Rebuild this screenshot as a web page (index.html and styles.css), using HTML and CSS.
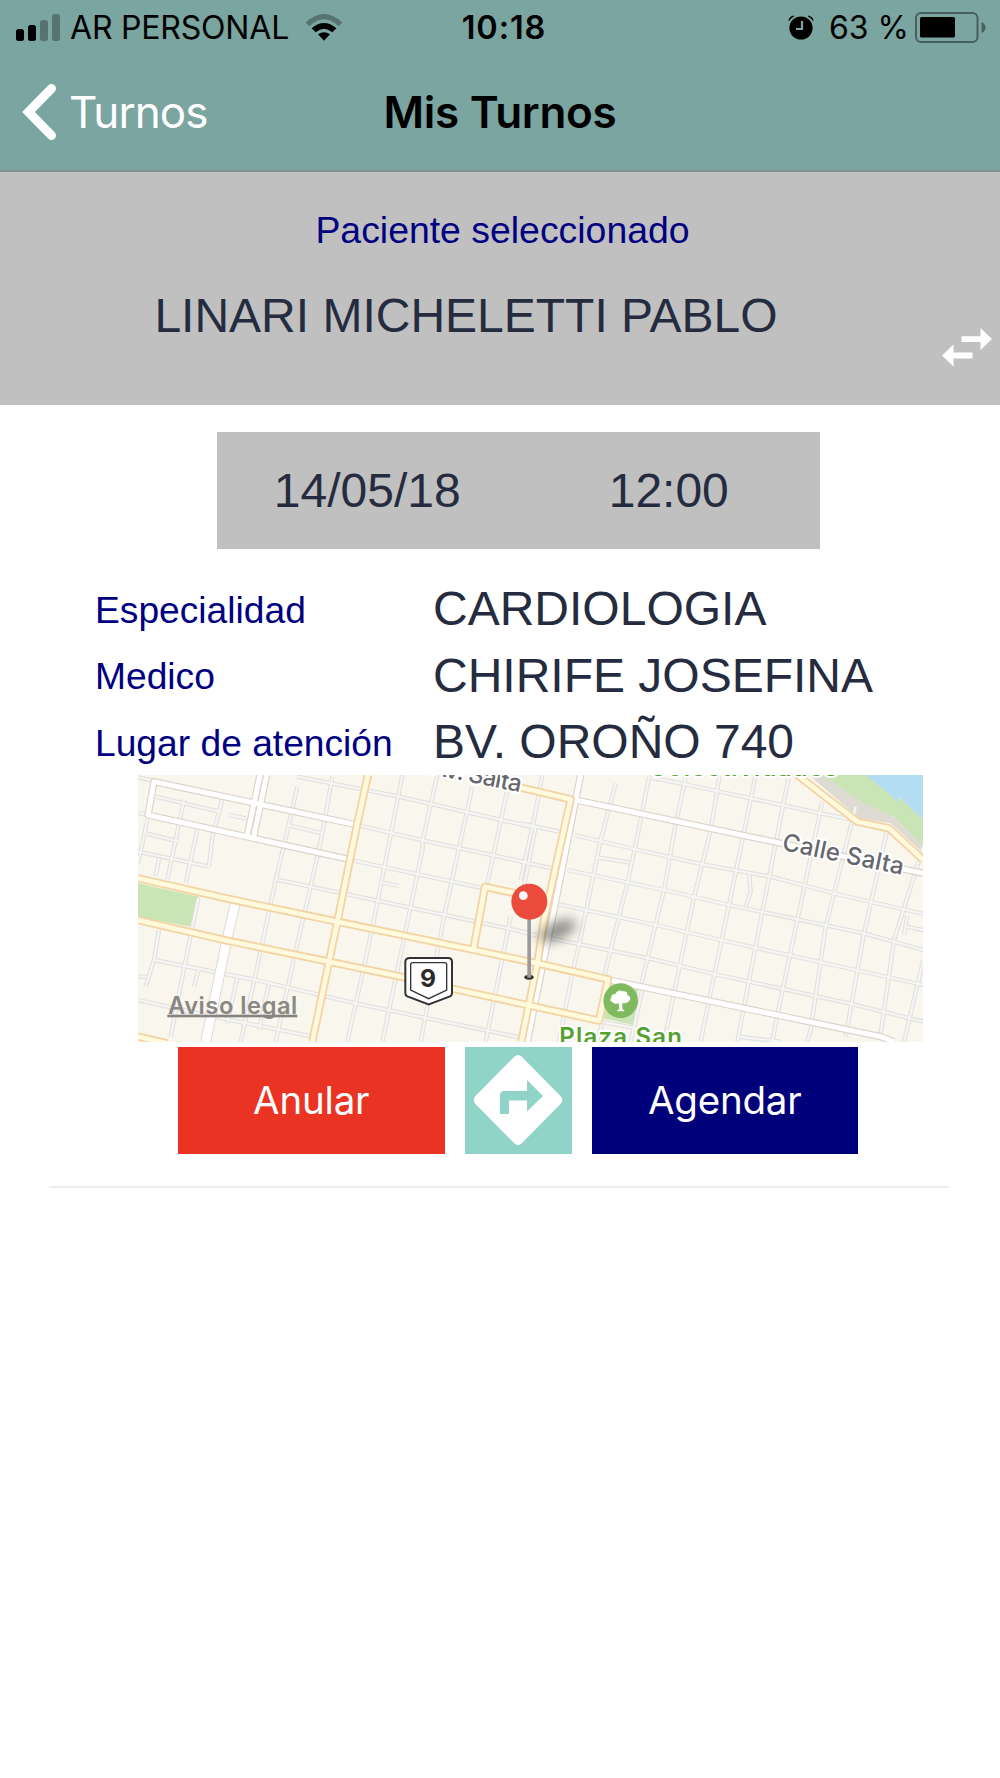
FILE: index.html
```html
<!DOCTYPE html>
<html lang="es">
<head>
    <meta charset="UTF-8">
    <meta name="viewport" content="width=device-width, initial-scale=1.0">
    <title>Mis Turnos</title>
    <link rel="stylesheet" href="styles.css">
</head>
<body>
    <header class="header">
        <div class="status-bar">
            <div class="status-left">
                <svg class="signal" width="46" height="28" viewBox="0 0 46 28">
                    <rect x="1" y="15" width="8" height="12" rx="2.5"/>
                    <rect x="13" y="11" width="8" height="16" rx="2.5"/>
                    <rect class="dim" x="25" y="6" width="8" height="21" rx="2.5"/>
                    <rect class="dim" x="37" y="0" width="8" height="27" rx="2.5"/>
                </svg>
                <span class="carrier">AR PERSONAL</span>
                <svg class="wifi" width="38" height="28" viewBox="0 0 38 28">
                    <path class="dim" d="M0.5 8.5Q19 -8.5 37.5 8.5L33.5 12.2Q19 -1.5 4.5 12.2Z"/>
                    <path d="M6.5 14.2Q19 3.8 31.5 14.2L27.3 18.3Q19 11 10.7 18.3Z"/>
                    <path d="M13 20.3Q19 16 25 20.3L19 26.7Z"/>
                </svg>
            </div>
            <span class="clock">10:18</span>
            <div class="status-right">
                <svg class="alarm" width="26" height="26" viewBox="0 0 26 26">
                    <circle cx="13" cy="13" r="11.6"/>
                    <path d="M0.3 5.8Q1.5 0.7 6.3 0.5L5.8 1.8Q3 2.8 1.3 5.8ZM25.7 5.8Q24.5 0.7 19.7 0.5L20.2 1.8Q23 2.8 24.7 5.8Z"/>
                    <path class="hands" d="M14 6V14H8"/>
                </svg>
                <span class="percent">63 %</span>
                <svg class="battery" width="71" height="31" viewBox="0 0 71 31">
                    <rect class="battery-case" x="1" y="1" width="61.5" height="29" rx="5"/>
                    <rect x="5" y="5" width="35" height="20.5" rx="1.5"/>
                    <path class="battery-tip" d="M66.5 10Q70.5 12 70.5 15.5T66.5 21Z"/>
                </svg>
            </div>
        </div>
        <nav class="navbar">
            <a class="back">
                <svg width="34" height="58" viewBox="0 0 34 58"><path d="M29.5 5.5L6.5 29L29.5 52.5"/></svg>
                <span>Turnos</span>
            </a>
            <h1 class="title">Mis Turnos</h1>
        </nav>
    </header>

    <section class="patient">
        <p class="patient-label">Paciente seleccionado</p>
        <p class="patient-name">LINARI MICHELETTI PABLO</p>
        <svg class="swap" width="50" height="39" viewBox="0 0 50 39">
            <path d="M19.5 8.3H38.5V0L50 11L38.5 22V14H19.5ZM30.5 24.5H11.5V16.5L0 27.5L11.5 38.5V30.5H30.5Z"/>
        </svg>
    </section>

    <main class="turno">
        <div class="date-box">
            <span>14/05/18</span>
            <span>12:00</span>
        </div>
        <dl class="details">
            <dt>Especialidad</dt><dd>CARDIOLOGIA</dd>
            <dt>Medico</dt><dd>CHIRIFE JOSEFINA</dd>
            <dt>Lugar de atención</dt><dd>BV. OROÑO 740</dd>
        </dl>

        <svg class="map" viewBox="22 15 2355 801" preserveAspectRatio="none">
            <defs>
                <filter id="blur" x="-50%" y="-100%" width="200%" height="300%"><feGaussianBlur stdDeviation="18"/></filter>
                <g id="minor">
                    <path d="M500 20L805 80L1200 170M680 165L880 212L1200 280M660 270L1200 385M435 328L740 392L1200 490M470 165L575 190M75 80L265 125M45 190L145 215M22 245L235 290M295 135L345 145M755 338L805 348M70 570L375 630L675 700L1180 805M22 620H50M22 690L250 740L545 800M22 22L70 32M22 128L50 135"/>
                    <path d="M500 50L480 140L435 330L380 590L330 815M605 20L575 190L540 350L500 520L435 815M815 15L740 400L700 590L650 815M920 15L875 215L876 235L840 410L755 815M1025 50L940 440L870 815M1130 60L1068 350M1140 440L1065 815M1215 170L1180 350M280 70L245 200L235 290M203 385L185 470L120 800M160 90L110 330M200 180L165 340M50 150L22 280M85 265L75 320M85 480L70 570L45 650M320 620L290 760M205 595L190 650M415 640L385 780"/>
                    <g transform="translate(1170)">
                        <path d="M385 22L490 42L900 130L1000 150M160 195L340 237L545 283L750 320L960 375L1208 432M140 300L430 360L625 405L1030 490L1208 540M115 403L405 465L600 510L1005 600L1208 645M90 505L385 565L580 612L985 700L1208 755M230 262L328 278M0 160L115 185M0 275L95 295M1155 470L1208 480M1160 435L1150 495M240 755L350 775M650 800L780 815M0 485L60 500"/>
                        <path d="M285 40L240 210L175 525L155 610L115 815M385 22L345 225L320 340L250 620M497 16L465 160L430 360L360 650M597 16L570 180L520 382L460 670L430 815M705 16L625 405L565 690L540 815M805 16L725 425L670 710L650 815M905 95L830 450L770 735L755 815M1005 110L915 470L870 780L860 815M1100 180L1030 490L975 800M1208 230L1120 510L1080 790M1208 570L1150 815M685 305L690 365L675 410M65 16L40 150L0 330M365 660L330 815M245 755L230 815"/>
                    </g>
                </g>
                <g id="white-major">
                    <path d="M680 165L70 35L52 135L655 268M388 15L350 195M408 15L368 205M1350 15L1335 90L1270 420L1235 590L1190 815M1335 90L2378 310M1435 630L2250 800L2290 815"/>
                </g>
                <g id="yellow-major">
                    <path d="M22 325L300 388L620 455L1030 540L1220 580L1432 628L1405 752L1190 705L970 657L820 622L595 575L290 512L22 450M712 15L680 160L620 455L595 575L545 815M1028 540L1063 350L1200 380M1150 48L1320 88L1240 450L1220 580L1172 815M22 800L110 820M2000 15L2180 155L2275 175L2378 270"/>
                </g>
            </defs>
            <rect class="land" x="22" y="15" width="2355" height="801"/>
            <path class="park" d="M22 340L205 380L188 472L22 440ZM1425 640H1525L1508 765L1415 745Z"/>
            <path class="shore" d="M2035 15L2185 145L2280 160L2378 250V200L2100 15Z"/>
            <path class="park" d="M2075 15L2200 100L2290 140L2378 225V140L2220 15Z"/>
            <path class="water" d="M2205 15L2280 75L2300 98L2305 80L2378 150V15Z"/>
            <use class="minor-case" href="#minor"/>
            <use class="minor-fill" href="#minor"/>
            <path class="boulevard-case" d="M315 395L288 512L225 816"/>
            <path class="boulevard" d="M315 395L288 512L225 816"/>
            <use class="white-case" href="#white-major"/>
            <use class="white-fill" href="#white-major"/>
            <use class="yellow-case" href="#yellow-major"/>
            <use class="yellow-fill" href="#yellow-major"/>

            <text class="street" transform="translate(898 12) rotate(11.5)" textLength="276">Av. Salta</text>
            <text class="street" transform="translate(1952 239) rotate(11.8)" textLength="370">Calle Salta</text>
            <text class="place" x="1555" y="19" textLength="565">Colectividades</text>
            <text class="place" x="1286" y="825" textLength="368">Plaza San</text>

            <g class="route">
                <path class="route-outer" d="M838 564H952Q964 564 964 576V670Q964 676 958 679L894 703L830 679Q824 676 824 670V576Q824 564 838 564Z"/>
                <path class="route-inner" d="M846 578H942Q948 578 948 584V660L894 686L840 660V584Q840 578 846 578Z"/>
                <text x="892" y="652">9</text>
            </g>

            <circle class="tree-disc" cx="1470" cy="692" r="52"/>
            <path class="tree" d="M1464 698Q1454 706 1445 696Q1434 692 1442 683Q1441 671 1454 672Q1462 656 1477 664Q1492 663 1490 675Q1504 681 1496 692Q1488 702 1475 699V716L1482 724H1458L1466 716Z"/>

            <ellipse class="pin-shadow" cx="1280" cy="482" rx="60" ry="26" transform="rotate(-25 1280 482)" filter="url(#blur)"/>
            <ellipse class="pin-base" cx="1195" cy="622" rx="14" ry="7"/>
            <rect class="pin-stem" x="1190" y="440" width="11" height="183"/>
            <circle class="pin-head" cx="1196" cy="395" r="54"/>
            <circle class="pin-shine" cx="1178" cy="377" r="13"/>

            <text class="legal" x="112" y="733" textLength="388">Aviso legal</text>
            <rect class="legal-line" x="110" y="734" width="390" height="8"/>
        </svg>

        <div class="actions">
            <button class="btn btn-cancel">Anular</button>
            <button class="btn btn-route">
                <svg width="90" height="92" viewBox="0 0 90 92">
                    <path class="diamond" d="M41.5 2.5Q45 -0.5 48.5 2.5L87.5 42Q91 46 87.5 50L48.5 89.5Q45 92.5 41.5 89.5L2.5 50Q-1 46 2.5 42Z"/>
                    <path class="turn" d="M27 60V41Q27 37 31 37H54V26L70 42L54 57.5V46.5H36V60Z"/>
                </svg>
            </button>
            <button class="btn btn-schedule">Agendar</button>
        </div>
    </main>
</body>
</html>
```

FILE: styles.css
```css
* {
    box-sizing: border-box;
}
body {
    margin: 0;
    background: white;
    font-family: "Liberation Sans", Arial, sans-serif;
    color: #262c40;
}
p, h1, dl, dd {
    margin: 0;
}
.header {
    height: 172px;
    background: #7ba5a0;
    border-bottom: 2px solid #808f8c;
    font-family: Inter, sans-serif;
    color: black;
}
.status-bar {
    display: grid;
    grid-template-columns: 1fr auto 1fr;
    align-items: center;
    height: 54px;
    padding: 1px 14px 0 15px;
    font-size: 32px;
}
.status-left, .status-right {
    display: flex;
    align-items: center;
}
.status-right {
    justify-content: flex-end;
}
.dim {
    opacity: 0.3;
}
.carrier {
    margin-left: 9px;
    letter-spacing: -0.2px;
}
.wifi {
    margin-left: 16px;
}
.clock {
    padding-left: 7px;
    font-size: 32.5px;
    font-weight: 600;
    letter-spacing: 0.9px;
}
.percent {
    margin: 0 6px 0 15px;
}
.hands {
    fill: none;
    stroke: #7ba5a0;
    stroke-width: 2.2;
}
.battery-case {
    fill: none;
    stroke: #47605d;
    stroke-width: 2;
}
.battery-tip {
    fill: #47605d;
}
.navbar {
    display: grid;
    grid-template-columns: 1fr auto 1fr;
    align-items: center;
    height: 116px;
    padding: 0 22px;
    font-size: 44px;
}
.back {
    display: flex;
    align-items: center;
    gap: 13px;
    letter-spacing: -0.9px;
    color: white;
}
.back path {
    fill: none;
    stroke: white;
    stroke-width: 9;
    stroke-linecap: round;
}
.title {
    font-size: 44px;
    font-weight: 600;
    letter-spacing: -0.3px;
}
.patient {
    position: relative;
    height: 233px;
    padding-top: 36px;
    background: #c0c0c0;
}
.patient-label {
    padding-left: 5px;
    font-size: 37.4px;
    line-height: 44px;
    text-align: center;
    color: #000080;
}
.patient-name {
    margin-top: 36px;
    padding-right: 68px;
    font-size: 48px;
    line-height: 56px;
    text-align: center;
}
.swap {
    position: absolute;
    right: 8px;
    bottom: 38px;
    fill: white;
}
.turno {
    display: flex;
    flex-direction: column;
    align-items: center;
    margin: 0 51px 0 49px;
    padding-top: 27px;
    border-bottom: 2px solid #ececec;
    height: 783px;
}
.date-box {
    display: grid;
    grid-template-columns: 1fr 1fr;
    align-items: center;
    width: 603px;
    height: 117px;
    margin-left: 38px;
    background: #c0c0c0;
    font-size: 48px;
    text-align: center;
}
.details {
    display: grid;
    grid-template-columns: 338px 1fr;
    grid-auto-rows: 66.7px;
    align-items: start;
    width: 100%;
    margin-top: 32px;
    padding-left: 46px;
    line-height: 55px;
}
.details dt {
    padding-top: 1.6px;
    font-size: 37.2px;
    color: #000080;
    white-space: nowrap;
}
.details dd {
    font-size: 48px;
    white-space: nowrap;
}
.map {
    display: block;
    flex: none;
    width: 785px;
    height: 267px;
    margin: -6.1px 0 0 62px;
    font-family: Inter, sans-serif;
}
.land {
    fill: #f9f6ee;
}
.park {
    fill: #c9e5b5;
}
.shore {
    fill: #dedbd3;
}
.water {
    fill: #b4ddf1;
}
.minor-case, .minor-fill, .white-case, .white-fill, .yellow-case, .yellow-fill, .boulevard, .boulevard-case {
    fill: none;
    stroke-linejoin: round;
}
.minor-case {
    stroke: #dfdedb;
    stroke-width: 13;
}
.minor-fill {
    stroke: #f5f5f4;
    stroke-width: 7;
}
.white-case {
    stroke: #dad4ca;
    stroke-width: 22;
}
.white-fill {
    stroke: white;
    stroke-width: 15;
}
.boulevard-case {
    stroke: #dedbd6;
    stroke-width: 32;
}
.boulevard {
    stroke: white;
    stroke-width: 26;
}
.yellow-case {
    stroke: #f4d4a5;
    stroke-width: 25;
}
.yellow-fill {
    stroke: #fffade;
    stroke-width: 14;
}
.street, .place {
    paint-order: stroke;
    stroke: white;
    stroke-width: 12;
    stroke-linejoin: round;
}
.street {
    font-size: 72px;
    font-weight: 500;
    fill: #66676d;
}
.place {
    font-size: 72px;
    font-weight: 600;
    fill: #55a12f;
}
.route-outer {
    fill: white;
    stroke: #333;
    stroke-width: 6;
}
.route-inner {
    fill: white;
    stroke: #333;
    stroke-width: 4;
}
.route text {
    font-size: 74px;
    font-weight: 700;
    text-anchor: middle;
    fill: #2b2b2b;
}
.tree-disc {
    fill: #7fba5e;
}
.tree, .pin-shine {
    fill: white;
}
.pin-shadow {
    opacity: 0.42;
}
.pin-base {
    fill: #333;
}
.pin-stem {
    fill: #9b9b9e;
}
.pin-head {
    fill: #ea4b3b;
}
.legal {
    font-size: 71px;
    font-weight: 600;
    fill: #8a8884;
}
.legal-line {
    fill: #85837f;
}
.actions {
    display: flex;
    gap: 20px;
    margin: 5px 0 0 38px;
}
.btn {
    width: 266.5px;
    height: 107px;
    padding: 0;
    border: none;
    font-family: Inter, sans-serif;
    font-size: 38.5px;
    letter-spacing: -0.2px;
    color: white;
}
.btn-cancel {
    background: #eb3323;
}
.btn-schedule {
    background: #00007b;
}
.btn-route {
    display: flex;
    align-items: center;
    justify-content: center;
    width: 107px;
    background: #90d3c8;
}
.diamond {
    fill: white;
}
.turn {
    fill: #90d3c8;
}
```
